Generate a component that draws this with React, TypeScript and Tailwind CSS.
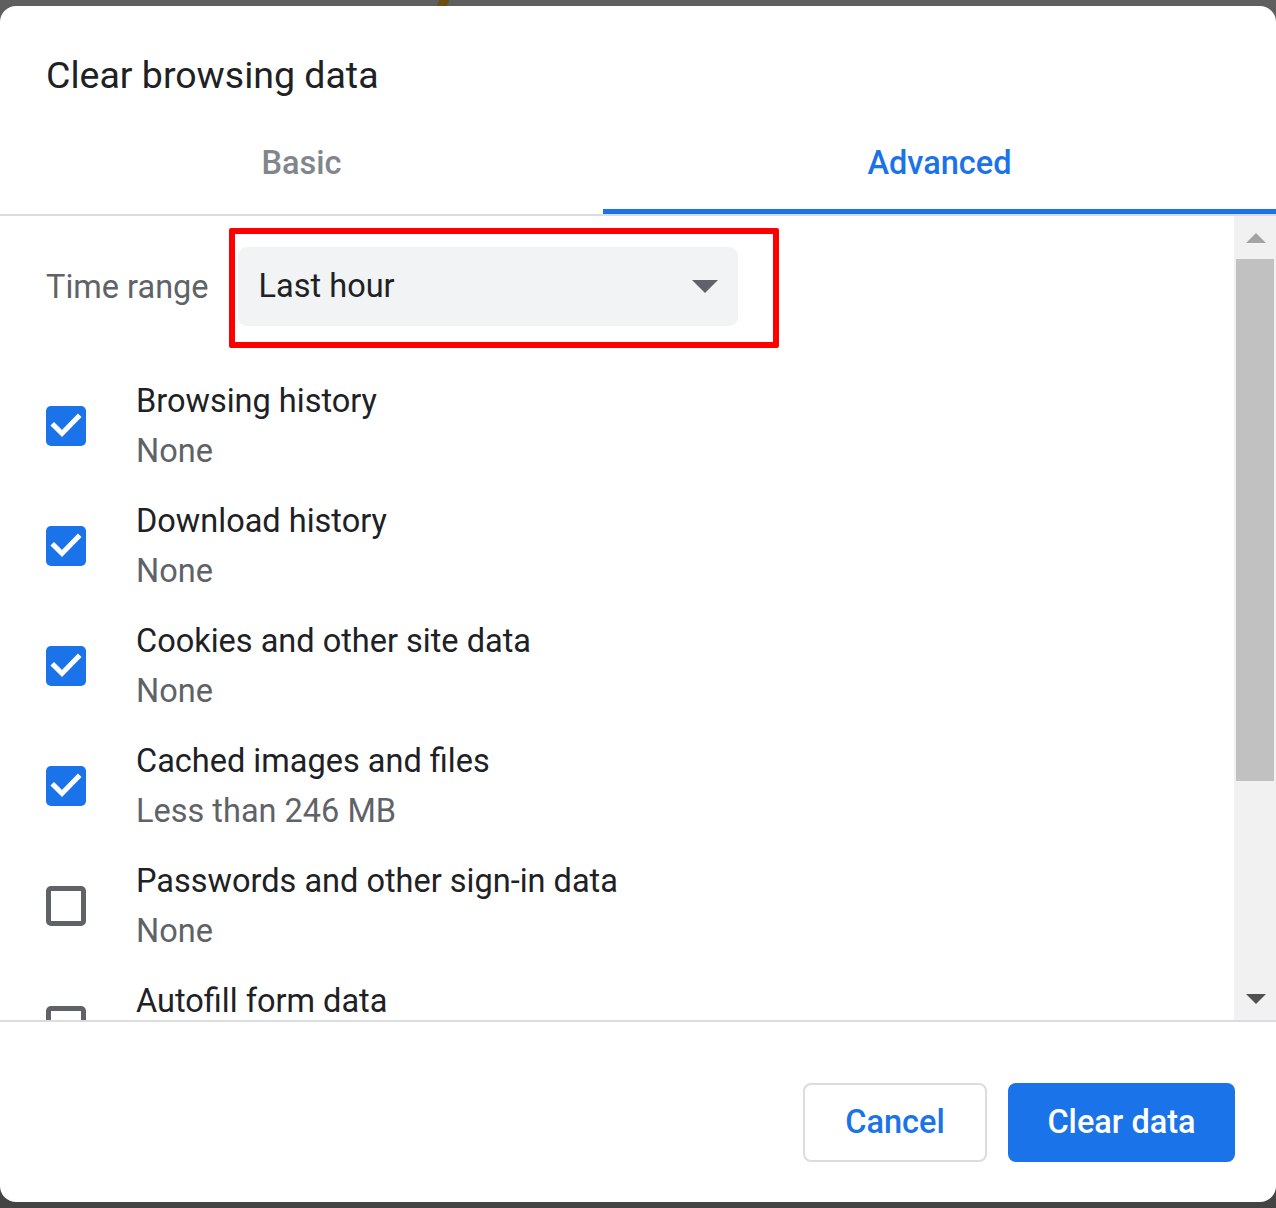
import React from "react";

type Item = { label: string; detail: string; checked: boolean };

const items: Item[] = [
  { label: "Browsing history", detail: "None", checked: true },
  { label: "Download history", detail: "None", checked: true },
  { label: "Cookies and other site data", detail: "None", checked: true },
  { label: "Cached images and files", detail: "Less than 246 MB", checked: true },
  { label: "Passwords and other sign-in data", detail: "None", checked: false },
  { label: "Autofill form data", detail: "", checked: false },
];

const Checkbox: React.FC<{ checked: boolean }> = ({ checked }) =>
  checked ? (
    <div className="w-[40px] h-[40px] shrink-0 rounded-[5px] bg-[#1a73e8] flex items-center justify-center">
      <svg width="40" height="40" viewBox="0 0 40 40">
        <path
          d="M8 19.5 L16 27.5 L32 11"
          fill="none"
          stroke="white"
          strokeWidth="5"
          strokeLinecap="square"
        />
      </svg>
    </div>
  ) : (
    <div className="w-[40px] h-[40px] shrink-0 rounded-[5px] border-[5px] border-[#5f6368]" />
  );

export default function App() {
  return (
    <div className="w-[1276px] h-[1208px] bg-linear-to-b from-[#5f5f5f] to-[#444444] font-['Roboto',sans-serif] overflow-hidden">
      {/* top strip */}
      <div className="h-[6px] flex">
        <div className="ml-[438px] w-[10px] h-[6px] bg-[#6b4e12] -skew-x-[25deg]" />
      </div>

      <div className="h-[1196px] bg-white rounded-[16px] flex flex-col overflow-hidden">
        {/* Title */}
        <div className="pt-[44px] pl-[46px] text-[37.5px] leading-[50px] text-[#202124]">
          Clear browsing data
        </div>

        {/* Tabs */}
        <div className="flex border-b-2 border-[#dadce0]">
          <div className="w-[603px] flex flex-col items-center">
            <div className="pt-[38px] pb-[21px] text-[32.5px] leading-[50px] font-medium text-[#80868b]">
              Basic
            </div>
            <div className="h-[5px] w-full" />
          </div>
          <div className="flex-1 flex flex-col items-center">
            <div className="pt-[38px] pb-[21px] text-[32.5px] leading-[50px] font-medium text-[#1a73e8]">
              Advanced
            </div>
            <div className="h-[5px] w-full bg-[#1a73e8]" />
          </div>
        </div>

        {/* Body */}
        <div className="h-[806px] flex border-b-2 border-[#dadce0]">
          <div className="flex-1 overflow-hidden pl-[46px]">
            <div className="mt-[31px] flex items-center">
              <span className="text-[32.5px] leading-[50px] text-[#5f6368]">Time range</span>
              <div className="relative ml-[29px]">
                <div className="w-[500px] h-[79px] rounded-[9px] bg-[#f1f3f4] flex items-center justify-between pl-[21px] pr-[20px]">
                  <span className="text-[32.5px] text-[#202124]">Last hour</span>
                  <svg width="26" height="13" viewBox="0 0 26 13">
                    <path d="M0 0 L26 0 L13 13 Z" fill="#5f6368" />
                  </svg>
                </div>
                <div className="absolute left-[-9px] top-[-19px] w-[550px] h-[120px] border-[6px] border-[#ff0000] rounded-[2px]" />
              </div>
            </div>

            <div className="mt-[50px] flex flex-col gap-[20px]">
              {items.map((item) => (
                <div key={item.label} className="flex items-center h-[100px]">
                  <Checkbox checked={item.checked} />
                  <div className="ml-[50px] flex flex-col">
                    <span className="text-[32.5px] leading-[50px] text-[#202124]">{item.label}</span>
                    <span className="text-[32.5px] leading-[50px] text-[#5f6368]">
                      {item.detail || "\u00a0"}
                    </span>
                  </div>
                </div>
              ))}
            </div>
          </div>

          {/* Scrollbar */}
          <div className="w-[42px] bg-[#f1f1f1] flex flex-col">
            <div className="h-[43px] flex items-center justify-center pl-[2px]">
              <svg width="20" height="10" viewBox="0 0 20 10">
                <path d="M10 0 L20 10 L0 10 Z" fill="#a3a3a3" />
              </svg>
            </div>
            <div className="h-[522px] ml-[2px] mr-[2px] bg-[#c1c1c1]" />
            <div className="flex-1" />
            <div className="h-[43px] flex items-center justify-center pl-[2px]">
              <svg width="20" height="10" viewBox="0 0 20 10">
                <path d="M0 0 L20 0 L10 10 Z" fill="#505050" />
              </svg>
            </div>
          </div>
        </div>

        {/* Footer */}
        <div className="flex-1 flex justify-end items-start pt-[61px] pr-[41px] gap-[21px]">
          <button className="w-[184px] h-[79px] rounded-[8px] border-2 border-[#dadce0] bg-white text-[32.5px] font-medium text-[#1a73e8]">
            Cancel
          </button>
          <button className="w-[227px] h-[79px] rounded-[8px] bg-[#1a73e8] text-[32.5px] font-medium text-white">
            Clear data
          </button>
        </div>
      </div>
    </div>
  );
}
